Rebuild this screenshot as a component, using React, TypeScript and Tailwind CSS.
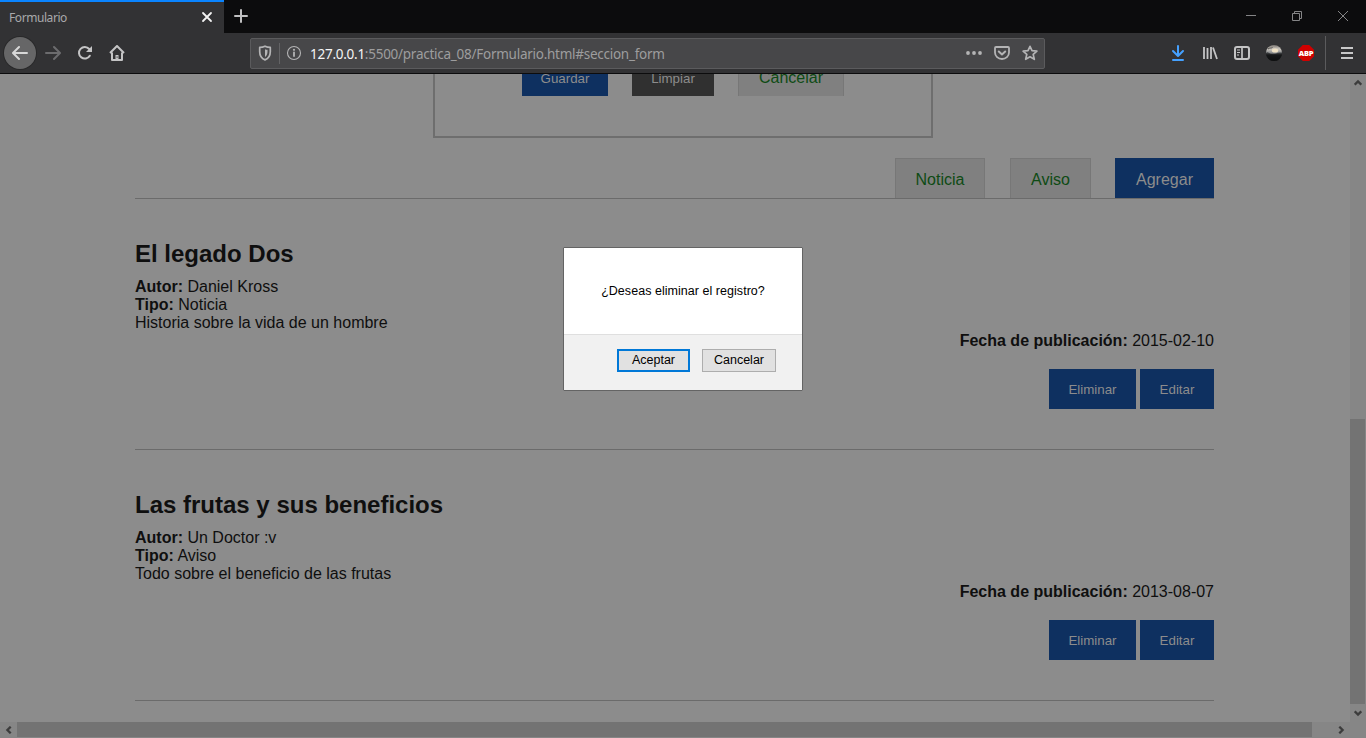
import type { ReactNode } from "react";

type IconProps = { children: ReactNode; className?: string; size?: number };

function Icon({ children, className = "text-[#c4c4c5]", size = 16 }: IconProps) {
  return (
    <svg
      width={size}
      height={size}
      viewBox="0 0 16 16"
      fill="none"
      stroke="currentColor"
      strokeWidth="2"
      strokeLinecap="round"
      strokeLinejoin="round"
      className={`block shrink-0 ${className}`}
    >
      {children}
    </svg>
  );
}

function TitleBar() {
  return (
    <div className="flex h-[33px] bg-[#0c0c0d]">
      <div className="flex h-full w-[224px] items-center justify-between border-t-2 border-[#0a84ff] bg-[#323234] pr-[9px] pl-[9px]">
        <span className="font-['Noto_Sans',sans-serif] text-[12px] leading-4 tracking-[-0.43px] text-[#a9a9ab]">Formulario</span>
        <Icon className="mb-[2px] text-[#f3f3f3]">
          <path d="M4 4l8 8M12 4l-8 8" strokeWidth="1.8" />
        </Icon>
      </div>
      <div className="flex flex-1 items-center pb-px pl-[9px]">
        <Icon className="text-[#c0c0c1]">
          <path d="M8 2v12M2 8h12" />
        </Icon>
      </div>
      <div className="flex w-[138px] pb-[2px] text-[#858586]">
        <div className="flex w-[46px] items-center justify-center">
          <svg width="10" height="10" viewBox="0 0 10 10" stroke="currentColor" fill="none"><path d="M0 4.5h10" /></svg>
        </div>
        <div className="flex w-[46px] items-center justify-center">
          <svg width="10" height="10" viewBox="0 0 10 10" stroke="currentColor" fill="none"><path d="M.5 2.5h7v7h-7zM2.5 2.5v-2h7v7h-2" /></svg>
        </div>
        <div className="flex w-[46px] items-center justify-center">
          <svg width="10" height="10" viewBox="0 0 10 10" stroke="currentColor" fill="none"><path d="M0 0l10 10M10 0L0 10" /></svg>
        </div>
      </div>
    </div>
  );
}

function AddressBar() {
  return (
    <div className="flex h-[31px] w-[795px] items-center rounded-[2px] border border-[#5b5b5d] bg-[#474749] pr-[6px] pl-[6px]">
      <Icon className="text-[#b4b4b5]">
        <path d="M8 1.2c1.8.9 3.5 1.2 5.3 1.2v4.300c0 4-2.100 6.900-5.300 8.200C4.800 13.600 2.700 10.700 2.700 6.700V2.400C4.500 2.400 6.200 2.100 8 1.200z" strokeWidth="1.7" />
        <path d="M8 4.200v7.700c1.700-1.100 2.500-3 2.500-5.200V4.800C9.600 4.700 8.800 4.500 8 4.200z" fill="currentColor" stroke="none" />
      </Icon>
      <div className="mx-[6px] h-[21px] w-px bg-[#636365]" />
      <Icon className="text-[#b4b4b5]">
        <circle cx="8" cy="8" r="6.5" strokeWidth="1.1" />
        <path d="M8 7.500v3.500" strokeWidth="1.800" />
        <circle cx="8" cy="4.800" r="1.100" fill="currentColor" stroke="none" />
      </Icon>
      <span className="ml-[8px] flex-1 pt-[2px] font-['Noto_Sans',sans-serif] text-[13.500px] leading-5 tracking-[-0.260px] whitespace-nowrap text-[#9d9d9e]">
        <span className="text-[#f5f5f5]">127.0.0.1</span>:5500/practica_08/Formulario.html#seccion_form
      </span>
      <div className="flex gap-[12px]">
        <Icon className="text-[#b4b4b5]">
          <g fill="currentColor" stroke="none"><circle cx="2" cy="8" r="1.900" /><circle cx="8" cy="8" r="1.900" /><circle cx="14" cy="8" r="1.900" /></g>
        </Icon>
        <Icon className="text-[#b4b4b5]">
          <path d="M2 2h12a1 1 0 0 1 1 1v4.500a7 6.500 0 0 1-14 0V3a1 1 0 0 1 1-1z" strokeWidth="1.800" />
          <path d="M4.800 6.500L8 9.500l3.200-3" />
        </Icon>
        <Icon className="text-[#b4b4b5]">
          <path d="M8 1.300l2 4.400 4.900.5-3.700 3.200 1.100 4.900L8 11.800l-4.300 2.500 1.100-4.900L1.100 6.200 6 5.700z" strokeWidth="1.700" />
        </Icon>
      </div>
    </div>
  );
}

function Toolbar() {
  return (
    <div className="flex h-[41px] items-center border-b border-[#0c0c0d] bg-[#323234] pl-[4px]">
      <div className="flex size-[32px] items-center justify-center rounded-full bg-[#666667] ring-1 ring-[#29292a]">
        <Icon className="text-[#d8d8d8]"><path d="M15 8H1.500M7 2L1 8l6 6" /></Icon>
      </div>
      <Icon className="ml-[9px] text-[#6c6c6e]"><path d="M1 8h13.500M9 2l6 6-6 6" /></Icon>
      <Icon className="ml-[16px] text-[#c4c4c5]">
        <path d="M12.800 10.700A5.800 5.800 0 1 1 12.200 4" />
        <path d="M15 1v6H9z" fill="currentColor" stroke="none" />
      </Icon>
      <Icon className="ml-[16px] text-[#c4c4c5]">
        <path d="M1 8l7-7 7 7M3 7.500V15h10V7.500" strokeLinecap="butt" />
        <path d="M6.500 15v-5h3v5z" fill="currentColor" stroke="none" />
        <path d="M7.600 11.500h1v1.300h-1z" fill="#323234" stroke="none" />
      </Icon>
      <div className="ml-[125px]"><AddressBar /></div>
      <div className="ml-[125px] flex items-center gap-[16px]">
        <Icon className="text-[#45a1ff]">
          <path d="M8 1v9.500M3 6l5 5 5-5M3 15h10" />
        </Icon>
        <Icon>
          <path d="M2 2v12M5.500 3v11M9 2v12M11 2.500L15 14" strokeWidth="1.800" strokeLinecap="butt" />
        </Icon>
        <Icon>
          <rect x="1" y="2" width="14" height="12" rx="2" />
          <path d="M8 2v12" strokeWidth="1.700" />
          <path d="M3 5h3M3 7.500h3M3 10h2" strokeWidth="1" strokeLinecap="butt" />
        </Icon>
        <svg width="16" height="16" viewBox="0 0 16 16" className="block">
          <defs>
            <linearGradient id="orb" x1="0" y1="0" x2="0" y2="1">
              <stop offset="0" stopColor="#77736f" />
              <stop offset=".25" stopColor="#cdc8c0" />
              <stop offset=".5" stopColor="#85888b" />
              <stop offset=".62" stopColor="#151617" />
              <stop offset="1" stopColor="#000000" />
            </linearGradient>
          </defs>
          <circle cx="8" cy="8" r="8" fill="url(#orb)" />
          <path d="M0 8c1-1.500 2.500-.5 4 .5s5 1 7-.3 3-.4 5-.7A8 8 0 0 1 0 9z" fill="#161719" opacity=".6" />
          <path d="M2 4c2-1.500 3-.5 4.500-1.500" stroke="#4c4a48" strokeWidth="1" fill="none" />
          <ellipse cx="9" cy="5.500" rx="3.200" ry="2" fill="#eee0c4" />
        </svg>
        <div className="flex size-4 items-center justify-center bg-[#d00000] [clip-path:polygon(30%_0,70%_0,100%_30%,100%_70%,70%_100%,30%_100%,0_70%,0_30%)]">
          <span className="font-['Open_Sans',sans-serif] text-[7.500px] leading-4 font-extrabold tracking-[-0.3px] text-white">ABP</span>
        </div>
      </div>
      <div className="ml-[11px] h-[34px] w-px bg-[#5b5b5d]" />
      <svg width="12" height="12" viewBox="0 0 12 12" className="ml-[15px] block"><path d="M0 1h12M0 6h12M0 11h12" stroke="#c8c8c9" strokeWidth="2" /></svg>
    </div>
  );
}

const tabStyle = "flex h-[40px] items-center justify-center border border-b-0 border-[#777777] bg-[#808080] pt-[2px] text-[16px] text-[#0e4b14]";
const blueButton = "flex h-[40px] items-center justify-center bg-[#0e3060] pt-[2px] text-[13.333px] text-[#8c8c8c]";

type Entry = { title: string; author: string; kind: string; summary: string; date: string };

const entries: Entry[] = [
  { title: "El legado Dos", author: "Daniel Kross", kind: "Noticia", summary: "Historia sobre la vida de un hombre", date: "2015-02-10" },
  { title: "Las frutas y sus beneficios", author: "Un Doctor :v", kind: "Aviso", summary: "Todo sobre el beneficio de las frutas", date: "2013-08-07" },
];

function Article({ entry }: { entry: Entry }) {
  return (
    <article className="h-[251px] border-b border-[#6b6b6b] pt-[41px] text-[16px] leading-[18px]">
      <h2 className="mb-[10px] text-[24px] leading-[28px] font-bold">{entry.title}</h2>
      <p><b>Autor:</b> {entry.author}</p>
      <p><b>Tipo:</b> {entry.kind}</p>
      <p>{entry.summary}</p>
      <p className="text-right"><b>Fecha de publicación:</b> {entry.date}</p>
      <div className="mt-[19px] flex justify-end gap-[4px]">
        <button className={`${blueButton} w-[87px]`}>Eliminar</button>
        <button className={`${blueButton} w-[74px]`}>Editar</button>
      </div>
    </article>
  );
}

function Page() {
  return (
    <main className="h-[648px] w-[1350px] overflow-hidden bg-[#8c8c8c] pl-[135px] text-[#0f0f0f]">
      <div className="w-[1079px]">
        <form className="ml-[298px] flex h-[64px] w-[500px] items-start gap-[24px] border-2 border-t-0 border-[#6e6e6e] pl-[87px]">
          <div className="-mt-[15px] flex gap-[24px]">
            <span className="flex h-[37px] w-[86px] items-center justify-center bg-[#0e3060] pt-[2px] text-[13.333px] text-[#8c8c8c]">Guardar</span>
            <span className="flex h-[37px] w-[82px] items-center justify-center bg-[#303030] pt-[2px] text-[13.333px] text-[#8c8c8c]">Limpiar</span>
            <span className="flex h-[37px] w-[106px] items-center justify-center border-x border-[#777777] bg-[#808080] text-[16px] text-[#0e4b14]">Cancelar</span>
          </div>
        </form>
        <nav className="mt-[20px] flex h-[41px] justify-end border-b border-[#6b6b6b]">
          <span className={`${tabStyle} mr-[25px] w-[90px]`}>Noticia</span>
          <span className={`${tabStyle} mr-[24px] w-[81px]`}>Aviso</span>
          <span className="flex h-[40px] w-[99px] items-center justify-center bg-[#0e3060] pt-[3px] text-[16px] text-[#8c8c8c]">Agregar</span>
        </nav>
        {entries.map((entry) => <Article key={entry.title} entry={entry} />)}
      </div>
    </main>
  );
}

function Chevron({ d }: { d: string }) {
  return <svg width="8" height="8" viewBox="0 0 8 8" fill="none" stroke="#3c3c3c" strokeWidth="2.3" className="block"><path d={d} /></svg>;
}

function VerticalScrollbar() {
  return (
    <div className="flex h-[648px] w-[16px] flex-col bg-[#868686]">
      <div className="flex h-[17px] w-[15px] items-center justify-center"><Chevron d="M.7 5.700L4 2.400l3.300 3.300" /></div>
      <div className="mt-[328px] h-[285px] w-[15px] bg-[#737373]" />
      <div className="flex h-[18px] w-[15px] items-center justify-center"><Chevron d="M.7 2.300L4 5.600l3.300-3.300" /></div>
    </div>
  );
}

function HorizontalScrollbar() {
  return (
    <div className="flex h-[16px] bg-[#868686]">
      <div className="flex h-[15px] w-[17px] items-center justify-center"><Chevron d="M5.700.7L2.400 4l3.300 3.300" /></div>
      <div className="h-[15px] w-[1295px] bg-[#737373]" />
      <div className="ml-[20px] flex h-[15px] w-[18px] items-center justify-center"><Chevron d="M2.300.7L5.600 4 2.300 7.300" /></div>
    </div>
  );
}

function ConfirmDialog() {
  return (
    <div className="absolute top-[247px] left-[563px] h-[144px] w-[240px] overflow-hidden rounded-[1px] border border-[#646464] bg-[#f1f1f1] text-[12px] text-black">
      <div className="flex h-[86px] items-center justify-center bg-white text-[12.500px] tracking-[0.04px]">¿Deseas eliminar el registro?</div>
      <div className="flex h-[56px] gap-[12px] border-t border-[#dfdfdf] pt-[14px] pl-[53px]">
        <button className="h-[23px] w-[73px] border-2 border-[#0078d7] bg-[#e1e1e1] pb-px text-[12.500px] leading-[18px]">Aceptar</button>
        <button className="h-[23px] w-[74px] border border-[#adadad] bg-[#e1e1e1] pb-px text-[12.500px] leading-[20px]">Cancelar</button>
      </div>
    </div>
  );
}

export default function App() {
  return (
    <div className="relative h-[738px] w-[1366px] overflow-hidden bg-[#8c8c8c] font-['Liberation_Sans',Arial,sans-serif]">
      <TitleBar />
      <Toolbar />
      <div className="flex">
        <Page />
        <VerticalScrollbar />
      </div>
      <HorizontalScrollbar />
      <ConfirmDialog />
    </div>
  );
}
